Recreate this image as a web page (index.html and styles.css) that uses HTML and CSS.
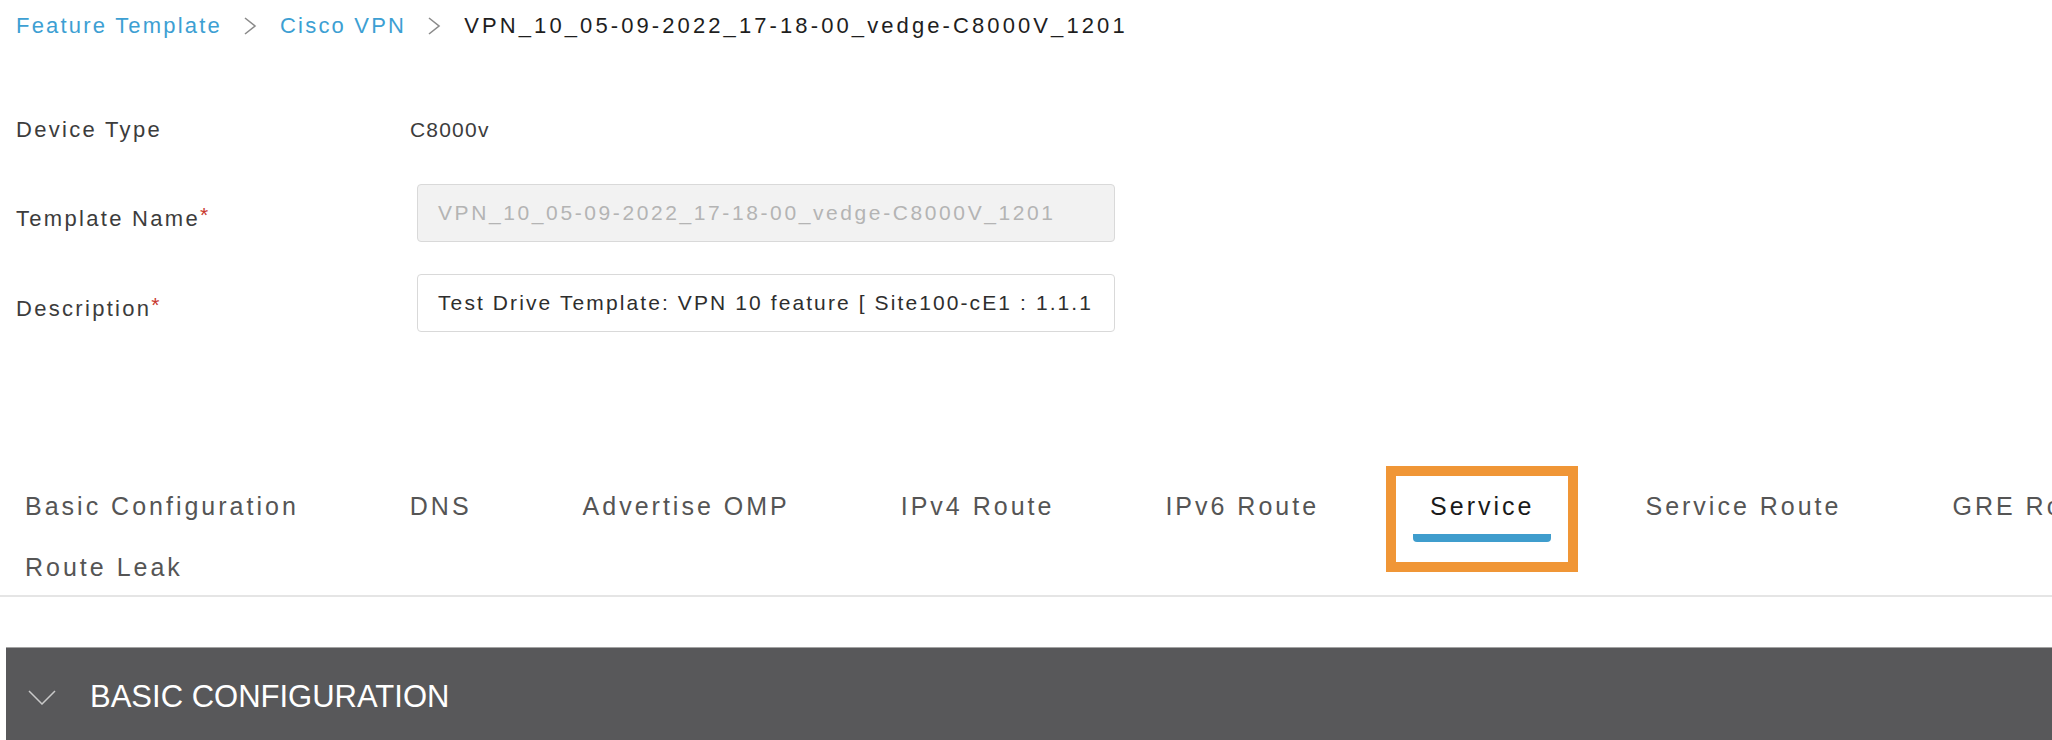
FILE: index.html
```html
<!DOCTYPE html>
<html lang="en">
<head>
<meta charset="utf-8">
<title>Cisco VPN Feature Template</title>
<link rel="stylesheet" href="styles.css">
</head>
<body>
<nav class="breadcrumb">
  <a class="crumb-link">Feature Template</a>
  <svg class="crumb-sep" width="14" height="18" viewBox="0 0 14 18"><polyline points="2,1 12,9 2,17" fill="none" stroke="#8a8a8a" stroke-width="1.6"/></svg>
  <a class="crumb-link">Cisco VPN</a>
  <svg class="crumb-sep" width="14" height="18" viewBox="0 0 14 18"><polyline points="2,1 12,9 2,17" fill="none" stroke="#8a8a8a" stroke-width="1.6"/></svg>
  <span class="crumb-current">VPN_10_05-09-2022_17-18-00_vedge-C8000V_1201</span>
</nav>

<section class="form">
  <div class="row row-static">
    <div class="label">Device Type</div>
    <div class="value">C8000v</div>
  </div>
  <div class="row">
    <div class="label label-field">Template Name<span class="req">*</span></div>
    <div class="field field-disabled">VPN_10_05-09-2022_17-18-00_vedge-C8000V_1201</div>
  </div>
  <div class="row">
    <div class="label label-field">Description<span class="req">*</span></div>
    <div class="field">Test Drive Template: VPN 10 feature [ Site100-cE1 : 1.1.1</div>
  </div>
</section>

<div class="tabbar">
  <ul class="tabs">
    <li class="tab">Basic Configuration</li>
    <li class="tab">DNS</li>
    <li class="tab">Advertise OMP</li>
    <li class="tab">IPv4 Route</li>
    <li class="tab">IPv6 Route</li>
    <li class="tab tab-active">Service</li>
    <li class="tab">Service Route</li>
    <li class="tab">GRE Route</li>
    <li class="tab">Route Leak</li>
  </ul>
</div>

<section class="panel">
  <div class="panel-header">
    <svg class="panel-chevron" width="28" height="15" viewBox="0 0 28 15"><polyline points="1,1 14,14 27,1" fill="none" stroke="#c9c9c9" stroke-width="1.5"/></svg>
    <span class="panel-title">BASIC CONFIGURATION</span>
  </div>
</section>
</body>
</html>
```

FILE: styles.css
```css
html, body {
  margin: 0;
  padding: 0;
  overflow: hidden;
  background: #ffffff;
}

body {
  font-family: "Liberation Sans", Arial, sans-serif;
  color: #333333;
}

.breadcrumb {
  height: 52px;
  display: flex;
  align-items: center;
  padding-left: 16px;
  font-size: 22px;
  letter-spacing: 2.2px;
}

.crumb-link {
  color: #3d9fd3;
}

.crumb-sep {
  margin: 0 23px 0 21px;
}

.crumb-current {
  color: #1e1e1e;
  letter-spacing: 3.1px;
}

.form {
  margin-top: 56px;
  padding-left: 16px;
}

.row {
  display: grid;
  grid-template-columns: 394px 705px;
  align-items: center;
  height: 58px;
  margin-top: 32px;
  font-size: 21px;
}

.row-static {
  height: 44px;
  margin-top: 0;
}

.label {
  color: #3c3c3c;
  font-size: 22px;
  letter-spacing: 2.3px;
}

.label-field {
  padding-top: 12px;
}

.req {
  color: #c8372d;
  font-size: 21px;
  vertical-align: top;
  letter-spacing: 0;
  position: relative;
  top: -3px;
}

.value {
  color: #3c3c3c;
  letter-spacing: 1.2px;
}

.field {
  box-sizing: border-box;
  height: 58px;
  margin-left: 7px;
  border: 1px solid #d9d9d9;
  border-radius: 4px;
  padding-left: 20px;
  display: flex;
  align-items: center;
  color: #2e2e2e;
  letter-spacing: 2.1px;
  white-space: nowrap;
  overflow: hidden;
}

.field-disabled {
  background: #f2f2f2;
  color: #b4b4b4;
  letter-spacing: 2.6px;
}

.tabbar {
  margin-top: 119px;
  padding-top: 40px;
  border-bottom: 2px solid #e5e5e5;
  overflow: hidden;
}

.tabs {
  list-style: none;
  margin: 0;
  padding: 0 0 0 8px;
  width: 2250px;
  display: flex;
  flex-wrap: wrap;
  column-gap: 77px;
  row-gap: 18px;
}

.tab {
  position: relative;
  padding: 0 17px 13px;
  line-height: 30px;
  font-size: 25px;
  letter-spacing: 3px;
  color: #555555;
  white-space: nowrap;
}

.tab-active {
  color: #1a1a1a;
}

.tab-active::after {
  content: "";
  position: absolute;
  left: 0;
  right: 0;
  top: 100%;
  height: 8px;
  background: #3f9dcd;
  border-radius: 0 0 4px 4px;
}

.tab-active::before {
  content: "";
  position: absolute;
  left: -27px;
  right: -27px;
  top: -25px;
  bottom: -38px;
  border: 10px solid #f09636;
}

.panel {
  margin-top: 50px;
  margin-left: 6px;
  border-top: 1px solid #a3a3a3;
  background: #58585a;
}

.panel-header {
  height: 98px;
  display: flex;
  align-items: center;
  padding-left: 22px;
}

.panel-chevron {
  margin-right: 34px;
}

.panel-title {
  color: #ffffff;
  font-size: 31px;
}
```
